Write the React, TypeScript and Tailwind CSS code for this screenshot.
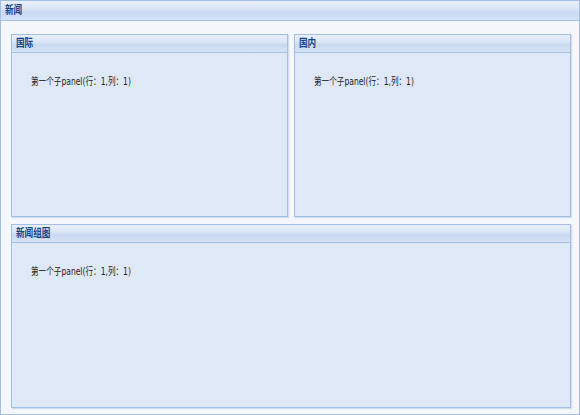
const headerBg =
  "bg-[linear-gradient(to_bottom,#e8f0fa_0%,#dbe6f6_40%,#c8d9f1_58%,#d6e3f5_100%)]";

function Panel({ title, className = "" }: { title: string; className?: string }) {
  return (
    <div className={`flex flex-col border border-[#a3bfe6] shadow-[1px_1px_1px_rgba(150,170,200,0.35)] ${className}`}>
      <div
        className={`h-[18px] shrink-0 border-b border-[#a3bfe6] px-[4px] text-[11px] font-bold leading-[18px] text-[#15428b] ${headerBg}`}
      >
        <span className="inline-block origin-left scale-x-[0.78]">{title}</span>
      </div>
      <div className="flex-1 bg-[#dfe8f6] px-[19px] pt-[22px] text-[10px] leading-[14px] text-[#222]">
        <span className="inline-block origin-left scale-x-[0.76]">第一个子panel(行：1,列：1)</span>
      </div>
    </div>
  );
}

export default function App() {
  return (
    <div
      className="flex h-[415px] w-[580px] flex-col border border-[#a3bfe6] bg-white"
      style={{ fontFamily: 'Tahoma, "DejaVu Sans", "Noto Sans CJK SC", sans-serif' }}
    >
      <div
        className={`h-[20px] shrink-0 border-b border-[#a3bfe6] px-[4px] text-[11px] font-bold leading-[19px] text-[#15428b] ${headerBg}`}
      >
        <span className="inline-block origin-left scale-x-[0.78]">新闻</span>
      </div>
      <div className="flex flex-1 flex-col gap-[7px] bg-[#f4f7fc] pb-[6px] pl-[10px] pr-[8px] pt-[13px]">
        <div className="flex h-[183px] gap-[6px]">
          <Panel title="国际" className="flex-1" />
          <Panel title="国内" className="flex-1" />
        </div>
        <Panel title="新闻组图" className="flex-1" />
      </div>
    </div>
  );
}
